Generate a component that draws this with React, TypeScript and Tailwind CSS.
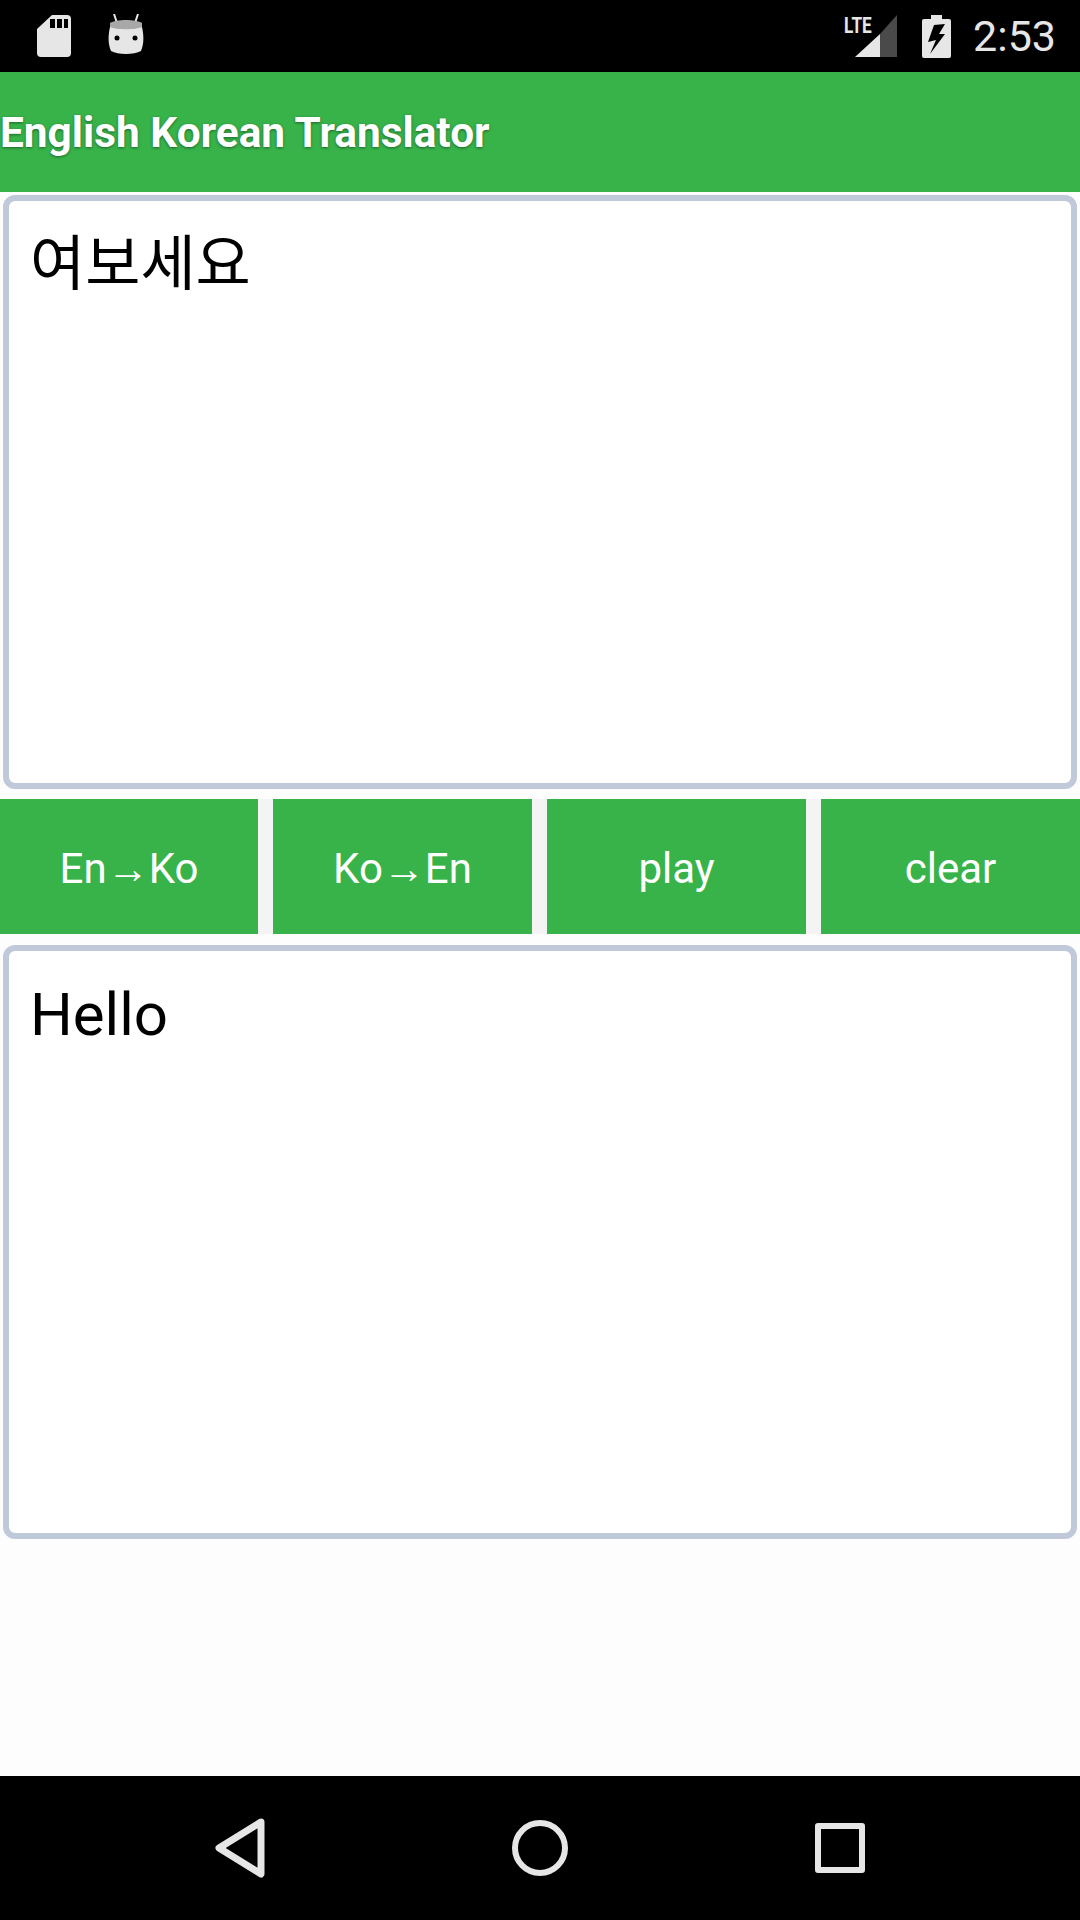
export default function App() {
  const gray = "#e6e6e6";
  const box = "mx-[3px] h-[594px] shrink-0 rounded-[12px] border-[6px] border-[#bfc9da] bg-white px-[21px] text-black";
  return (
    <div className="flex h-[1920px] w-[1080px] flex-col overflow-hidden bg-[#fdfdfd] font-['Roboto',sans-serif]">
      <div className="flex h-[72px] shrink-0 items-center justify-between bg-black">
        <div className="flex items-center">
          <svg className="ml-[37px]" width="34" height="44" viewBox="0 0 34 44">
            <path d="M15 1H30a4 4 0 0 1 4 4V39a4 4 0 0 1-4 4H4a4 4 0 0 1-4-4V15Z" fill={gray} />
            <rect x="13" y="5" width="5" height="9" fill="#000" />
            <rect x="20" y="5" width="5" height="9" fill="#000" />
            <rect x="27" y="5" width="4" height="9" fill="#000" />
          </svg>
          <svg className="ml-[37px] mb-[3px]" width="36" height="42" viewBox="0 0 36 42">
            <path d="M6 0L9 9M30 0L27 9" stroke={gray} strokeWidth="2" />
            <path d="M2 9C8 5 28 5 34 9L34 16H2Z" fill="#a8a8a8" />
            <path d="M2 13C8 16 28 16 34 13C36 22 36 30 33 37C26 41 10 41 3 37C0 30 0 22 2 13Z" fill={gray} />
            <circle cx="9" cy="24" r="2.5" fill="#000" />
            <circle cx="27" cy="24" r="2.5" fill="#000" />
          </svg>
        </div>
        <div className="flex items-center">
          <div className="relative h-[42px] w-[53px]">
            <svg className="absolute left-0 top-0" width="53" height="42" viewBox="0 0 53 42">
              <path d="M11 42L36 19V42Z" fill={gray} />
              <path d="M36 19L53 0V42H36Z" fill="#4a4a4a" />
            </svg>
            <span className="absolute left-0 top-[-2px] origin-top-left scale-x-[0.78] text-[22px] font-bold leading-[26px] text-[#e6e6e6]">LTE</span>
          </div>
          <svg className="ml-[25px]" width="29" height="43" viewBox="0 0 29 43">
            <path d="M9 0H20V4H27a2 2 0 0 1 2 2V41a2 2 0 0 1-2 2H2a2 2 0 0 1-2-2V6a2 2 0 0 1 2-2H9Z" fill={gray} />
            <path d="M23 9L12 10L6 27L14 25L8 39L23 19H17Z" fill="#000" />
          </svg>
          <span className="ml-[22px] mr-[24px] text-[43px] leading-none text-[#e6e6e6]">2:53</span>
        </div>
      </div>

      <div className="flex h-[120px] shrink-0 items-center bg-[#37b34a] pt-[3px]">
        <h1 className="text-[42.4px] font-bold leading-none text-white [text-shadow:0_1px_3px_rgba(0,0,0,0.45)]">English Korean Translator</h1>
      </div>

      <div className="flex flex-1 flex-col bg-[#fdfdfd] pt-[3px]">
        <div className={`${box} pt-[22px] font-['Noto_Sans_CJK_KR',sans-serif] text-[60px] leading-[72px]`}>여보세요</div>

        <div className="mt-[10px] grid h-[135px] shrink-0 grid-cols-[258px_259px_259px_259px] gap-[15px] bg-[#f4f4f4] text-[42px] text-white">
          {["En→Ko", "Ko→En", "play", "clear"].map((t) => (
            <div key={t} className="flex items-center justify-center bg-[#37b34a] pt-[4px]">{t}</div>
          ))}
        </div>

        <div className={`${box} mt-[11px] pt-[30px] text-[60px] leading-[68px]`}>Hello</div>
      </div>

      <div className="flex h-[144px] shrink-0 items-center bg-black pl-[214px]">
        <svg width="54" height="60" viewBox="0 0 54 60">
          <path d="M47 4L5 30L47 56Z" fill="none" stroke={gray} strokeWidth="7" strokeLinejoin="round" />
        </svg>
        <div className="ml-[244px] h-[56px] w-[56px] rounded-full border-[6px] border-[#e6e6e6]" />
        <div className="ml-[247px] h-[50px] w-[50px] rounded-[3px] border-[6px] border-[#e6e6e6]" />
      </div>
    </div>
  );
}
